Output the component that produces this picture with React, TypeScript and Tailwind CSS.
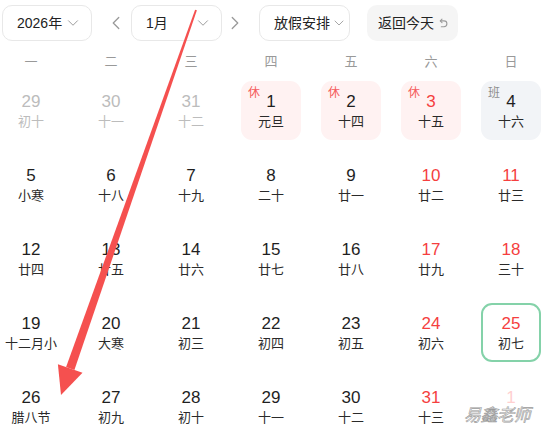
import { ChevronDown, ChevronLeft, ChevronRight } from 'lucide-react';

type Day = {
  d: number;
  lunar: string;
  kind: 'prev' | 'cur' | 'next';
  red?: boolean;
  tag?: '休' | '班';
  today?: boolean;
};

const WEEK = ['一', '二', '三', '四', '五', '六', '日'];

// 2026年1月（月曜始まり）
const DAYS: Day[] = [
  { d: 29, lunar: '初十', kind: 'prev' },
  { d: 30, lunar: '十一', kind: 'prev' },
  { d: 31, lunar: '十二', kind: 'prev' },
  { d: 1, lunar: '元旦', kind: 'cur', tag: '休' },
  { d: 2, lunar: '十四', kind: 'cur', tag: '休' },
  { d: 3, lunar: '十五', kind: 'cur', tag: '休', red: true },
  { d: 4, lunar: '十六', kind: 'cur', tag: '班' },
  { d: 5, lunar: '小寒', kind: 'cur' },
  { d: 6, lunar: '十八', kind: 'cur' },
  { d: 7, lunar: '十九', kind: 'cur' },
  { d: 8, lunar: '二十', kind: 'cur' },
  { d: 9, lunar: '廿一', kind: 'cur' },
  { d: 10, lunar: '廿二', kind: 'cur', red: true },
  { d: 11, lunar: '廿三', kind: 'cur', red: true },
  { d: 12, lunar: '廿四', kind: 'cur' },
  { d: 13, lunar: '廿五', kind: 'cur' },
  { d: 14, lunar: '廿六', kind: 'cur' },
  { d: 15, lunar: '廿七', kind: 'cur' },
  { d: 16, lunar: '廿八', kind: 'cur' },
  { d: 17, lunar: '廿九', kind: 'cur', red: true },
  { d: 18, lunar: '三十', kind: 'cur', red: true },
  { d: 19, lunar: '十二月小', kind: 'cur' },
  { d: 20, lunar: '大寒', kind: 'cur' },
  { d: 21, lunar: '初三', kind: 'cur' },
  { d: 22, lunar: '初四', kind: 'cur' },
  { d: 23, lunar: '初五', kind: 'cur' },
  { d: 24, lunar: '初六', kind: 'cur', red: true },
  { d: 25, lunar: '初七', kind: 'cur', red: true, today: true },
  { d: 26, lunar: '腊八节', kind: 'cur' },
  { d: 27, lunar: '初九', kind: 'cur' },
  { d: 28, lunar: '初十', kind: 'cur' },
  { d: 29, lunar: '十一', kind: 'cur' },
  { d: 30, lunar: '十二', kind: 'cur' },
  { d: 31, lunar: '十三', kind: 'cur', red: true },
  { d: 1, lunar: '', kind: 'next' },
];

function DayCell({ day }: { day: Day }) {
  let box = 'border-2 border-transparent';
  if (day.tag === '休') box = 'bg-[#fff2f2] border-2 border-transparent';
  if (day.tag === '班') box = 'bg-[#f2f4f7] border-2 border-transparent';
  if (day.today) box = 'border-2 border-[#84d2a9]';

  let numColor = 'text-[#1f1f1f]';
  let lunarColor = 'text-[#2a2a2a]';
  if (day.kind === 'prev') {
    numColor = 'text-[#bcbcbc]';
    lunarColor = 'text-[#bcbcbc]';
  } else if (day.kind === 'next') {
    numColor = 'text-[#ffd0d0]';
  } else if (day.red) {
    numColor = 'text-[#f53f3f]';
  }

  return (
    <div className={`relative h-[59px] rounded-[11px] flex flex-col items-center pt-[9px] ${box}`}>
      {day.tag && (
        <span
          className={`absolute left-[5px] top-[2px] text-[12px] leading-[16px] ${
            day.tag === '休' ? 'text-[#f55a5a]' : 'text-[#8e8e8e]'
          }`}
        >
          {day.tag}
        </span>
      )}
      <span className={`text-[17px] leading-[20px] ${numColor}`}>{day.d}</span>
      <span className={`mt-[1px] text-[13px] leading-[18px] whitespace-nowrap ${lunarColor}`}>
        {day.lunar}
      </span>
    </div>
  );
}

function UndoIcon() {
  return (
    <svg width="9" height="11" viewBox="0 0 9 11" fill="none" stroke="#9a9a9a" strokeWidth="1.1">
      <path d="M3 1.2 1.3 2.9 3 4.6" strokeLinecap="round" strokeLinejoin="round" />
      <path d="M1.4 2.9H5a2.9 2.9 0 0 1 0 5.8H2.3" strokeLinecap="round" />
    </svg>
  );
}

export default function App() {
  return (
    <div
      className="relative w-[542px] h-[437px] bg-white overflow-hidden text-[#222]"
      style={{ fontFamily: '"Liberation Sans", "Noto Sans CJK SC", sans-serif' }}
    >
      {/* ヘッダー */}
      <div className="flex items-center pt-[5px] text-[14px]">
        <div className="ml-[2px] w-[90px] h-[36px] border border-[#e8e8e8] rounded-[10px] flex items-center justify-between pl-[14px] pr-[9px]">
          <span>2026年</span>
          <ChevronDown size={18} strokeWidth={1.3} color="#999" />
        </div>
        <ChevronLeft size={22} strokeWidth={1.4} color="#999" className="ml-[13px]" />
        <div className="ml-[4px] w-[91px] h-[36px] border border-[#e8e8e8] rounded-[10px] flex items-center justify-between pl-[14px] pr-[9px]">
          <span>1月</span>
          <ChevronDown size={18} strokeWidth={1.3} color="#999" />
        </div>
        <ChevronRight size={22} strokeWidth={1.4} color="#999" className="ml-[2px]" />
        <div className="ml-[13px] w-[91px] h-[36px] border border-[#e8e8e8] rounded-[10px] flex items-center pl-[14px]">
          <span>放假安排</span>
          <ChevronDown size={16} strokeWidth={1.3} color="#999" className="ml-[1px]" />
        </div>
        <div className="ml-[17px] w-[91px] h-[36px] bg-[#f5f5f5] rounded-[10px] flex items-center pl-[11px] gap-[5px]">
          <span>返回今天</span>
          <UndoIcon />
        </div>
      </div>

      {/* 曜日 */}
      <div className="ml-[1px] mt-[12px] grid grid-cols-[repeat(7,60px)] gap-x-[20px]">
        {WEEK.map(w => (
          <div key={w} className="text-center text-[13px] leading-[18px] text-[#999]">
            {w}
          </div>
        ))}
      </div>

      {/* 日付 */}
      <div className="ml-[1px] mt-[10px] grid grid-cols-[repeat(7,60px)] gap-x-[20px] gap-y-[15px]">
        {DAYS.map((day, i) => (
          <DayCell key={i} day={day} />
        ))}
      </div>

      {/* 注釈の矢印 */}
      <svg className="absolute left-0 top-0 pointer-events-none" width="542" height="437">
        <polygon
          points="196.9,10.3 195.1,9.7 66.1,367.0 74.4,369.9"
          fill="#f5504f"
        />
        <polygon points="61,395 82.5,372.8 57.9,364.2" fill="#f5504f" />
      </svg>

      {/* ウォーターマーク */}
      <span className="absolute left-[464px] top-[406px] text-[17px] leading-[20px] italic text-[#f4f4f4] [-webkit-text-stroke:0.6px_#9a9a9a] tracking-[-0.5px]">
        易鑫老师
      </span>
    </div>
  );
}
